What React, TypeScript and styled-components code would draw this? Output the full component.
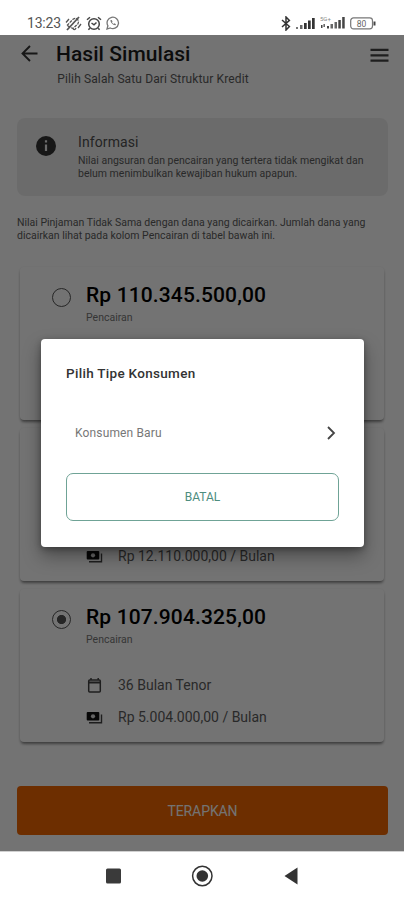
import React from "react";
import styled, { createGlobalStyle } from "styled-components";

const Global = createGlobalStyle`
  * { box-sizing: border-box; }
  body { margin: 0; background: #fff; font-family: Roboto, "Liberation Sans", sans-serif; color: #1c1c1c; }
  button { font-family: inherit; cursor: pointer; }
`;

const Phone = styled.div`
  width: 404px;
  height: 900px;
  display: flex;
  flex-direction: column;
  overflow: hidden;
  background: #fff;
`;

const StatusBar = styled.div`
  height: 35px;
  flex: none;
  display: flex;
  justify-content: space-between;
  align-items: center;
  padding: 11px 28px 0 27px;
`;

const StatusGroup = styled.div<{ $gap: number }>`
  display: flex;
  align-items: center;
  gap: ${(p) => p.$gap}px;
`;

const Screen = styled.main`
  position: relative;
  height: 816px;
  flex: none;
  display: flex;
  flex-direction: column;
  overflow: hidden;
`;

const Header = styled.header`
  display: flex;
  height: 83px;
  flex: none;
  padding: 6px 14px 0 19px;
`;

const HeaderIcon = styled.button<{ $top: number }>`
  display: block;
  width: 21px;
  height: 21px;
  margin-top: ${(p) => p.$top}px;
  padding: 0;
  border: 0;
  background: none;
`;

const Titles = styled.div`
  flex: 1;
  padding-left: 16px;
`;

const Text = styled.div<{ $size: number; $line: number; $spacing?: number; $weight?: number; $color?: string }>`
  font-size: ${(p) => p.$size}px;
  line-height: ${(p) => p.$line}px;
  letter-spacing: ${(p) => p.$spacing ?? 0}px;
  font-weight: ${(p) => p.$weight ?? 400};
  color: ${(p) => p.$color ?? "#5c5c5c"};
  white-space: nowrap;
`;

const InfoBox = styled.section`
  display: flex;
  flex: none;
  height: 78px;
  margin: 0 16px 0 17px;
  padding: 14px 0 0 18px;
  gap: 21px;
  border-radius: 8px;
  background: #eee;
`;

const InfoIcon = styled.svg`
  margin-top: 3px;
  flex: none;
`;

const InfoBody = styled.div`
  display: flex;
  flex-direction: column;
  gap: 3px;
`;

const Note = styled.div`
  margin: 21px 17px 25px;
  flex: none;
`;

const CardList = styled.div`
  display: flex;
  flex-direction: column;
  gap: 8px;
  margin: 0 20px;
`;

const Card = styled.article`
  height: 153px;
  padding: 15px 30px 0;
  border-radius: 4px;
  background: #fff;
  box-shadow: 0 3px 3px -1px rgba(0, 0, 0, 0.4), 0 1px 3px rgba(0, 0, 0, 0.14);
`;

const CardTop = styled.div`
  display: flex;
  gap: 14px;
  height: 65px;
`;

const Radio = styled.span<{ $on: boolean }>`
  width: 19px;
  height: 19px;
  margin: 6px 1px 0 2px;
  flex: none;
  border: 1.8px solid #555;
  border-radius: 50%;
  background: ${(p) => (p.$on ? "radial-gradient(circle, #555 4.2px, transparent 5px)" : "transparent")};
`;

const Detail = styled.div`
  display: flex;
  align-items: center;
  height: 32px;
  padding-left: 36px;
  gap: 15px;
`;

const Apply = styled.button`
  height: 49px;
  flex: none;
  margin: 44px 16px 0 17px;
  border: 0;
  padding: 0;
  border-radius: 4px;
  background: #f26700;
`;

const Scrim = styled.div`
  position: absolute;
  inset: 0;
  display: flex;
  justify-content: center;
  align-items: flex-start;
  padding: 304px 0 0 1px;
  background: rgba(0, 0, 0, 0.55);
`;

const Dialog = styled.div`
  width: 323px;
  height: 208px;
  padding: 24px 25px 0;
  border-radius: 4px;
  background: #fff;
  box-shadow: 0 9px 18px rgba(0, 0, 0, 0.35), 0 2px 6px rgba(0, 0, 0, 0.3);
`;

const Option = styled.div`
  display: flex;
  justify-content: space-between;
  align-items: center;
  height: 46px;
  margin: 27px 0 17px;
  padding-left: 9px;
`;

const Cancel = styled.button`
  display: block;
  width: 273px;
  height: 48px;
  padding: 0;
  border: 1px solid #6fa396;
  border-radius: 7px;
  background: #fff;
`;

const Centered = styled(Text)`
  text-align: center;
`;

const NavBar = styled.nav`
  flex: 1;
  display: flex;
  align-items: center;
  justify-content: center;
  gap: 67px;
  border-top: 1px solid #d0d0d0;
`;

function Signal() {
  return (
    <svg width="19" height="13" viewBox="0 0 19 13" fill="#333">
      <rect x="0" y="10" width="2" height="2" fill="#777" />
      <rect x="4" y="8" width="2.5" height="4" fill="#666" />
      <rect x="8" y="6" width="2.7" height="6" />
      <rect x="12" y="3.5" width="2.7" height="8.5" />
      <rect x="16" y="1" width="2.7" height="11" />
    </svg>
  );
}

function Status() {
  return (
    <StatusBar>
      <StatusGroup $gap={4}>
        <Text $size={14} $line={18} $spacing={-0.2} $color="#555">13:23</Text>
        <svg width="17" height="15" viewBox="0 0 17 15" fill="none" stroke="#555" strokeWidth="1.3">
          <path d="M2 9.5 8 3.2q3-1.8 4.6.3 1.6 2 .2 4.5L8 12.5z" strokeDasharray="3 1" />
          <path d="M2 14 14 1" strokeWidth="1.8" />
          <path d="M1 6.5 4 3M13 12l3-4M8 13q2 1.5 3-1" />
        </svg>
        <svg width="16" height="15" viewBox="0 0 16 15" fill="none" stroke="#444" strokeWidth="1.5">
          <circle cx="8" cy="8" r="5.3" />
          <path d="M1 3.8 4 1.2M15 3.8 12 1.2M5.5 7 8 8.8 10.5 6.5M3.8 12.2 2.4 13.8M12.2 12.2l1.4 1.6" />
        </svg>
        <svg width="14" height="14" viewBox="0 0 14 14" fill="none" stroke="#777" strokeWidth="1.3">
          <path d="M1 13l.9-3.2A5.7 5.7 0 1 1 4.3 12z" />
          <path d="M4.6 4.1c-.9 2 2.8 5.7 4.9 5.2l.5-1-1.6-1-.8.6-1.6-1.5.5-.9-.8-1.5z" fill="#777" stroke="none" />
        </svg>
      </StatusGroup>
      <StatusGroup $gap={5}>
        <svg width="10" height="15" viewBox="0 0 10 15" fill="none" stroke="#333" strokeWidth="1.5">
          <path d="m1 4 7.4 6.5L5 14V1l3.4 3.4L1 11" />
        </svg>
        <Signal />
        <svg width="25" height="14" viewBox="0 0 25 14" fill="#444">
          <text x="0" y="5" fontSize="6" fontFamily="Roboto" fill="#888">5G+</text>
          <rect x="1" y="9" width="1.5" height="3" />
          <rect x="3.5" y="8" width="1.3" height="3" />
          <rect x="7" y="10" width="2" height="2.5" />
          <rect x="10.5" y="8" width="2.5" height="4.5" fill="#666" />
          <rect x="14.5" y="6" width="2.5" height="6.5" fill="#666" />
          <rect x="18.3" y="4" width="2.5" height="8.5" />
          <rect x="22.2" y="1" width="2.5" height="11.5" />
        </svg>
        <svg width="26" height="13" viewBox="0 0 26 13" fill="none" stroke="#777" strokeWidth="1.2">
          <rect x=".7" y=".9" width="21.8" height="11" rx="2.8" />
          <path d="M24.5 4.5v4" stroke="#444" strokeWidth="2" />
          <text x="11.5" y="9.6" fontSize="8.5" fontFamily="Roboto" textAnchor="middle" fill="#666" stroke="none">80</text>
        </svg>
      </StatusGroup>
    </StatusBar>
  );
}

function CalendarIcon() {
  return (
    <svg width="17" height="17" viewBox="0 0 17 17" fill="none" stroke="#444" strokeWidth="1.5">
      <rect x="2.7" y="3" width="11.6" height="12" rx="1" />
      <path d="M2.7 5.5h11.6" strokeWidth="2" />
      <path d="M5 1v2M12.2 1v2" />
    </svg>
  );
}

function CashIcon() {
  return (
    <svg width="17" height="17" viewBox="0 0 17 17" fill="none">
      <rect x=".7" y="3" width="12.6" height="8.6" rx="1" fill="#111" />
      <circle cx="7" cy="7.3" r="2.1" fill="#ddd" />
      <path d="M15.5 5.5v8.3H3" stroke="#444" strokeWidth="1.4" />
    </svg>
  );
}

interface Loan { amount: string; months: string; monthly: string; selected: boolean }

const loans: Loan[] = [
  { amount: "Rp 110.345.500,00", months: "", monthly: "", selected: false },
  { amount: "", months: "", monthly: "Rp 12.110.000,00 / Bulan", selected: false },
  { amount: "Rp 107.904.325,00", months: "36 Bulan Tenor", monthly: "Rp 5.004.000,00 / Bulan", selected: true },
];

function LoanCard({ loan }: { loan: Loan }) {
  return (
    <Card>
      <CardTop>
        {loan.amount && (
          <>
            <Radio $on={loan.selected} />
            <div>
              <Text $size={21} $line={26} $spacing={0.13} $weight={500} $color="#000">{loan.amount}</Text>
              <Text $size={10.5} $line={19} $color="#777">Pencairan</Text>
            </div>
          </>
        )}
      </CardTop>
      <Detail>
        {loan.months && <><CalendarIcon /><Text $size={14} $line={20}>{loan.months}</Text></>}
      </Detail>
      <Detail>
        {loan.monthly && <><CashIcon /><Text $size={14} $line={20}>{loan.monthly}</Text></>}
      </Detail>
    </Card>
  );
}

export default function App() {
  return (
    <Phone>
      <Global />
      <Status />
      <Screen>
        <Header>
          <HeaderIcon $top={2} aria-label="Kembali">
            <svg width="21" height="21" viewBox="0 0 21 21" fill="none" stroke="#333" strokeWidth="1.9">
              <path d="M18.5 10.5H3.5M11 3 3.5 10.5 11 18" />
            </svg>
          </HeaderIcon>
          <Titles>
            <Text $size={21} $line={26} $spacing={0.05} $weight={500} $color="#1c1c1c">Hasil Simulasi</Text>
            <Text $size={12} $line={24} $spacing={0.12}>&#8202;Pilih Salah Satu Dari Struktur Kredit</Text>
          </Titles>
          <HeaderIcon $top={4} aria-label="Menu">
            <svg width="21" height="21" viewBox="0 0 21 21" fill="none" stroke="#444" strokeWidth="2.3">
              <path d="M1.5 4.8h18M1.5 10.3h18M1.5 15.7h18" />
            </svg>
          </HeaderIcon>
        </Header>
        <InfoBox>
          <InfoIcon width="22" height="22" viewBox="0 0 22 22">
            <circle cx="11" cy="11" r="10" fill="#333" />
            <path d="M11 5.2v2.2M11 9.5v6.5" stroke="#eee" strokeWidth="2.2" />
          </InfoIcon>
          <InfoBody>
            <Text $size={14} $line={20} $spacing={0.1} $color="#505050">Informasi</Text>
            <Text $size={10.5} $line={12.5}>
              <div>Nilai angsuran dan pencairan yang tertera tidak mengikat dan</div>
              <div>belum menimbulkan kewajiban hukum apapun.</div>
            </Text>
          </InfoBody>
        </InfoBox>
        <Note>
          <Text $size={10.5} $line={12.5} $spacing={-0.01}>
            <div>Nilai Pinjaman Tidak Sama dengan dana yang dicairkan. Jumlah dana yang</div>
            <div>dicairkan lihat pada kolom Pencairan di tabel bawah ini.</div>
          </Text>
        </Note>
        <CardList>
          {loans.map((loan, i) => <LoanCard key={i} loan={loan} />)}
        </CardList>
        <Apply>
          <Centered $size={14} $line={20} $spacing={-0.1} $color="#fff">TERAPKAN</Centered>
        </Apply>
        <Scrim>
          <Dialog role="dialog">
            <Text $size={13.5} $line={20} $spacing={0.3} $weight={500} $color="#333">Pilih Tipe Konsumen</Text>
            <Option>
              <Text $size={12} $line={20} $spacing={0.15} $color="#777">Konsumen Baru</Text>
              <svg width="16" height="16" viewBox="0 0 16 16" fill="none" stroke="#444" strokeWidth="1.8">
                <path d="m5 2 6 6-6 6" />
              </svg>
            </Option>
            <Cancel>
              <Centered $size={12} $line={20} $color="#4d8d7e">BATAL</Centered>
            </Cancel>
          </Dialog>
        </Scrim>
      </Screen>
      <NavBar>
        <svg width="22" height="22" viewBox="0 0 22 22"><rect x="4" y="3.5" width="15" height="15" rx="1.5" fill="#3a3a3a" /></svg>
        <svg width="22" height="22" viewBox="0 0 22 22" fill="none"><circle cx="11.3" cy="11" r="9.7" stroke="#333" strokeWidth="1.5" /><circle cx="11.3" cy="11" r="5.8" fill="#333" /></svg>
        <svg width="22" height="22" viewBox="0 0 22 22"><path d="M4.5 11 17.5 2.5v17z" fill="#333" /></svg>
      </NavBar>
    </Phone>
  );
}
